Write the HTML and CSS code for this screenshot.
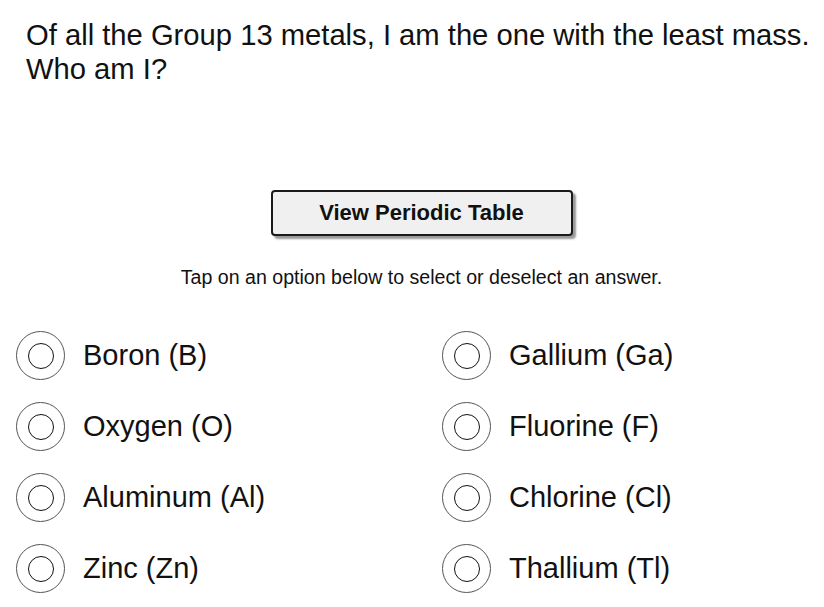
FILE: index.html
```html
<!DOCTYPE html>
<html lang="en">
<head>
    <meta charset="UTF-8">
    <meta name="viewport" content="width=device-width, initial-scale=1.0">
    <title>Quiz</title>
    <link rel="stylesheet" href="styles.css">
</head>
<body>
    <main class="quiz">
        <h1 class="question">Of all the Group 13 metals, I am the one with the least mass.<br>Who am I?</h1>

        <div class="tools">
            <button class="table-btn">View Periodic Table</button>
            <p class="hint">Tap on an option below to select or deselect an answer.</p>
        </div>

        <ul class="options">
            <li class="option"><span class="radio"></span>Boron (B)</li>
            <li class="option"><span class="radio"></span>Gallium (Ga)</li>
            <li class="option"><span class="radio"></span>Oxygen (O)</li>
            <li class="option"><span class="radio"></span>Fluorine (F)</li>
            <li class="option"><span class="radio"></span>Aluminum (Al)</li>
            <li class="option"><span class="radio"></span>Chlorine (Cl)</li>
            <li class="option"><span class="radio"></span>Zinc (Zn)</li>
            <li class="option"><span class="radio"></span>Thallium (Tl)</li>
        </ul>
    </main>
</body>
</html>
```

FILE: styles.css
```css
body {
    font-family: "Liberation Sans", Arial, sans-serif;
    margin: 0;
    padding: 0;
    background: #fff;
    color: #111;
}

.question {
    margin: 0;
    padding: 18px 4px 0 26px;
    font-size: 29.2px;
    font-weight: normal;
    line-height: 34px;
}

.tools {
    padding: 0 8px 0 27px;
    text-align: center;
}

.table-btn {
    margin-top: 104px;
    width: 302px;
    height: 46px;
    font-family: inherit;
    font-size: 22px;
    font-weight: bold;
    color: #111;
    background: #f0f0f0;
    border: 2px solid #1a1a1a;
    border-radius: 4px;
    box-shadow: 3px 3px 2px #999;
}

.hint {
    margin: 29px 0 0;
    font-size: 19.6px;
    line-height: 24px;
}

.options {
    list-style: none;
    margin: 0;
    padding: 42px 0 0 16px;
    display: grid;
    grid-template-columns: 426px 1fr;
    row-gap: 22px;
}

.option {
    display: flex;
    align-items: center;
    gap: 18px;
    font-size: 29px;
    height: 49px;
}

.radio {
    width: 47px;
    height: 47px;
    border: 1px solid #555;
    border-radius: 50%;
    display: flex;
    align-items: center;
    justify-content: center;
    flex-shrink: 0;
}

.radio::after {
    content: "";
    width: 24px;
    height: 24px;
    border: 1.5px solid #111;
    border-radius: 50%;
}
```
